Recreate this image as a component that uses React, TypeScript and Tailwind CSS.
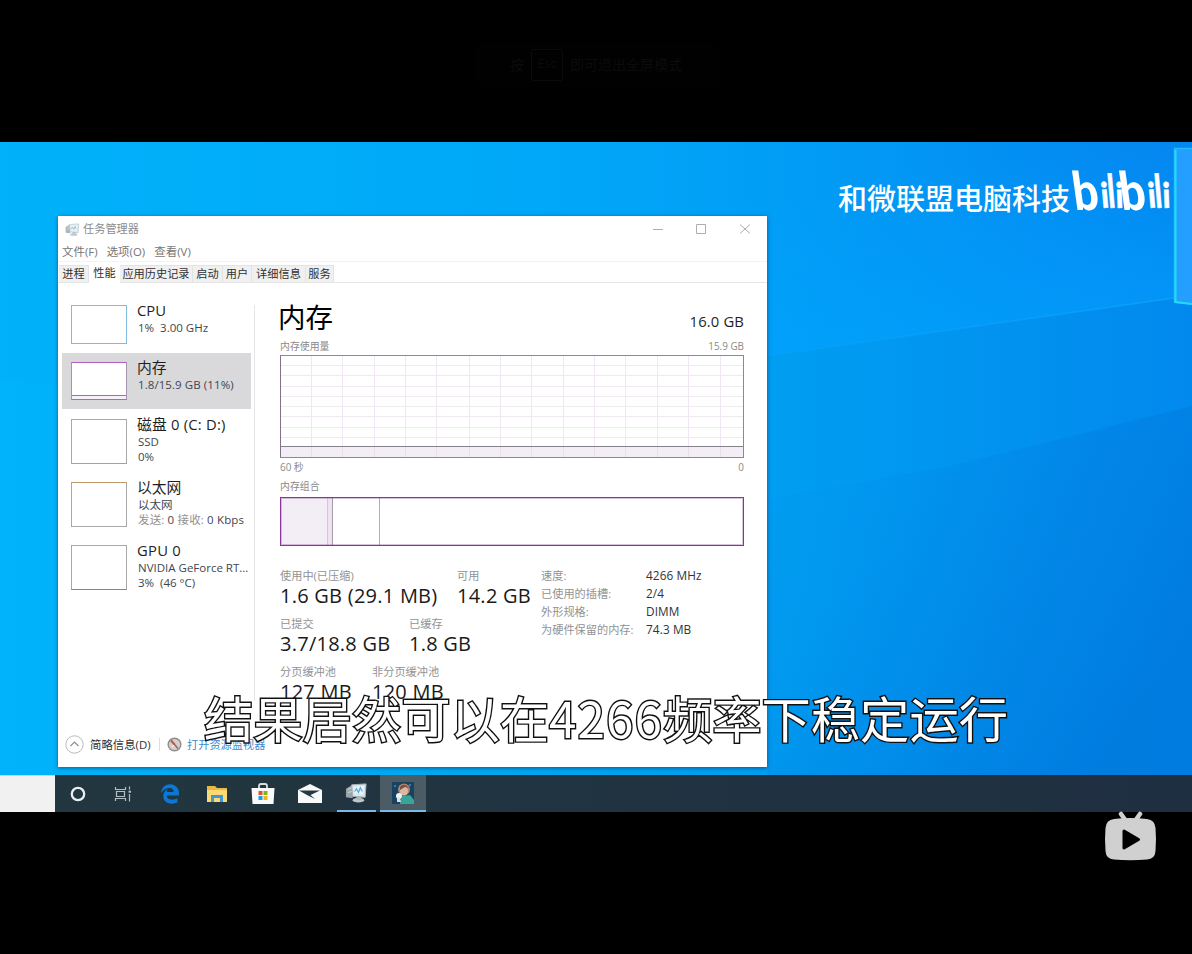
import { FaEdgeLegacy } from 'react-icons/fa'

const tabs = [
  { name: '进程', width: 'w-[30px]' },
  { name: '性能', width: 'w-[31px]', active: true },
  { name: '应用历史记录', width: 'w-[73px]' },
  { name: '启动', width: 'w-[30px]' },
  { name: '用户', width: 'w-[29px]' },
  { name: '详细信息', width: 'w-[54px]' },
  { name: '服务', width: 'w-[28px]' },
]

const gridX = [31, 62, 94, 125, 156, 189, 220, 251, 283, 314, 345, 377, 408, 440]
const gridY = [10, 20, 31, 41, 51, 61, 72, 82]

const specs = [
  { label: '速度:', value: '4266 MHz' },
  { label: '已使用的插槽:', value: '2/4' },
  { label: '外形规格:', value: 'DIMM' },
  { label: '为硬件保留的内存:', value: '74.3 MB' },
]

function Wallpaper() {
  return (
    <svg className="absolute inset-0" width="1192" height="634" viewBox="0 0 1192 634">
      <defs>
        <linearGradient id="base" x1="0" y1="0" x2="1" y2="0">
          <stop offset="0" stopColor="#00b3fb" />
          <stop offset="0.4" stopColor="#00a9f2" />
          <stop offset="0.65" stopColor="#009ef2" />
          <stop offset="1" stopColor="#0289ed" />
        </linearGradient>
        <linearGradient id="sky" x1="0" y1="0" x2="1" y2="0">
          <stop offset="0" stopColor="#00b2f9" />
          <stop offset="0.5" stopColor="#01a6f8" />
          <stop offset="0.75" stopColor="#0297f4" />
          <stop offset="1" stopColor="#0484f0" />
        </linearGradient>
        <linearGradient id="skyFade" x1="0" y1="0" x2="0.4" y2="1">
          <stop offset="0.3" stopColor="#00a4ff" stopOpacity="0" />
          <stop offset="0.9" stopColor="#00a4ff" stopOpacity="0.5" />
        </linearGradient>
        <linearGradient id="beam" x1="0" y1="0" x2="1" y2="0.6">
          <stop offset="0" stopColor="#0080e0" stopOpacity="0" />
          <stop offset="0.35" stopColor="#007fe0" stopOpacity="0.15" />
          <stop offset="1" stopColor="#0077db" stopOpacity="0.75" />
        </linearGradient>
        <linearGradient id="ray" x1="0" y1="0" x2="1" y2="0">
          <stop offset="0" stopColor="#13aeff" stopOpacity="0.1" />
          <stop offset="1" stopColor="#13aeff" stopOpacity="0.5" />
        </linearGradient>
      </defs>
      <rect width="1192" height="634" fill="url(#base)" />
      <path d="M0 0H1192V155L1174 156L767 214L500 240H0Z" fill="url(#sky)" />
      <path d="M500 0H1192V155L1174 156L767 214L500 240Z" fill="url(#skyFade)" />
      <path d="M767 357L950 324L1192 264V634H767Z" fill="url(#beam)" />
      <path d="M767 214L1174 156" stroke="url(#ray)" strokeWidth="1.500" />
      <path d="M1175 7H1192V162L1175 160Z" fill="#249eff" />
      <path d="M1192 6.500H1174.500V160L1192 162" fill="none" stroke="#21bcff" strokeWidth="1.500" />
      <path d="M1175.500 8V160L1192 162" fill="none" stroke="#20dcfa" strokeWidth="2" />
    </svg>
  )
}

function MonitorIcon({ size }: { size: number }) {
  return (
    <svg width={size} height={size} viewBox="0 0 24 24">
      <path d="M1 8L8 4V18L1 17Z" fill="#98a4aa" />
      <path d="M3 9L7 7M3 12L7 11" stroke="#d4dbde" />
      <path d="M7 4L22 3L21 17L8 16Z" fill="#dce4e8" stroke="#a9b3b9" />
      <path d="M9 6L20 5L19 14L10 13.500Z" fill="#e6f4fb" />
      <path d="M10 11L12 8L14 12L16 7L18 11" fill="none" stroke="#55a9cf" strokeWidth="1.200" />
      <ellipse cx="14" cy="20" rx="6" ry="2.500" fill="#c1c7ca" />
      <path d="M12 16H17V20H12Z" fill="#aeb6ba" />
    </svg>
  )
}

function TitleBar() {
  return (
    <div className="flex h-[26px] items-center pl-[7px] text-[11.2px] text-[#8c8c8c]">
      <div className="opacity-80">
        <MonitorIcon size={15} />
      </div>
      <span className="ml-[3px]">任务管理器</span>
      <svg className="ml-auto mr-4" width="98" height="12" viewBox="0 0 98 12" fill="none" stroke="#aeaeae">
        <path d="M0 6.500H10" />
        <path d="M43.500 1.500H52.500V10.500H43.500Z" />
        <path d="M87 1.500L97 10.500M97 1.500L87 10.500" />
      </svg>
    </div>
  )
}

function Sidebar() {
  return (
    <div className="flex h-[396px] w-[197px] flex-col border-r border-[#e5e5e5] pl-1 text-[11.5px] leading-[15px] text-[#3d4650]">
      <div className="flex h-[48px] w-[189px] pl-[9px]">
        <div className="h-[39px] w-[56px] border border-[#7ebbdc]" />
        <div className="ml-[10px] -mt-[4px]">
          <div className="pb-px text-[14.8px] leading-[18px] text-[#1f1f1f]">CPU</div>
          <div className="pl-px whitespace-pre">1%  3.00 GHz</div>
        </div>
      </div>
      <div className="flex h-[56px] w-[189px] bg-[#d9d8da] pl-[9px] pt-[9px]">
        <div className="flex h-[38px] w-[56px] flex-col justify-end border-x border-b border-t border-x-[#a794af] border-b-[#8d7f95] border-t-[#b35cc2] bg-white">
          <div className="h-[4px] border-t border-[#b85fc6] bg-[#f7eff9]" />
        </div>
        <div className="ml-[10px] -mt-[4px]">
          <div className="pb-px text-[14.8px] leading-[18px] text-[#1f1f1f]">内存</div>
          <div className="pl-px tracking-[0.08px] whitespace-nowrap">1.8/15.9 GB (11%)</div>
        </div>
      </div>
      <div className="flex h-[63px] w-[189px] pl-[9px] pt-[10px]">
        <div className="h-[45px] w-[56px] border-x border-t border-b border-x-[#a8a8a8] border-t-[#a8a8a8] border-b-[#82c24a]" />
        <div className="ml-[10px] -mt-[4px]">
          <div className="pb-px text-[14.8px] leading-[18px] tracking-[0.2px] text-[#1f1f1f]">磁盘 0 (C: D:)</div>
          <div className="pl-px">SSD</div>
          <div className="pl-px">0%</div>
        </div>
      </div>
      <div className="flex h-[63px] w-[189px] pl-[9px] pt-[10px]">
        <div className="h-[45px] w-[56px] border-x border-t border-b border-x-[#a8a8a8] border-b-[#a8a8a8] border-t-[#c19868]" />
        <div className="ml-[10px] -mt-[4px]">
          <div className="pb-px text-[14.8px] leading-[18px] text-[#1f1f1f]">以太网</div>
          <div className="pl-px">以太网</div>
          <div className="pl-px tracking-[0.15px] whitespace-nowrap">
            <span className="text-[#929292]">发送:</span> 0 <span className="text-[#929292]">接收:</span> 0 Kbps
          </div>
        </div>
      </div>
      <div className="flex h-[63px] w-[189px] pl-[9px] pt-[10px]">
        <div className="h-[45px] w-[56px] border-x border-t border-b border-x-[#a8a8a8] border-t-[#a8a8a8] border-b-[#479bb9]" />
        <div className="ml-[10px] -mt-[4px]">
          <div className="pb-px text-[14.8px] leading-[18px] tracking-[0.25px] text-[#1f1f1f]">GPU 0</div>
          <div className="pl-px whitespace-nowrap">NVIDIA GeForce RT...</div>
          <div className="pl-px whitespace-pre">3%  (46 °C)</div>
        </div>
      </div>
    </div>
  )
}

function UsageChart() {
  return (
    <svg className="block" width="464" height="104" viewBox="0 0 464 104" shapeRendering="crispEdges">
      {gridX.map((x) => (
        <path key={x} d={`M${x + 0.5} 1V103`} stroke="#f1e6f3" />
      ))}
      {gridY.map((y) => (
        <path key={y} d={`M1 ${y + 0.5}H463`} stroke="#f0e9f1" />
      ))}
      <rect x="1" y="92" width="462" height="11" fill="#f3eef5" />
      {gridX.map((x) => (
        <path key={x} d={`M${x + 0.5} 92V103`} stroke="#e8dfea" />
      ))}
      <path d="M0 91.500H463" stroke="#85808a" />
      <rect x="0.500" y="0.500" width="463" height="102" fill="none" stroke="#b969c4" />
      <path d="M0.500 1V102" stroke="#83718a" />
    </svg>
  )
}

function Composition() {
  return (
    <div className="flex h-[49px] w-[464px] border border-[#8c349b] outline outline-[#8c349b]/30 outline-offset-[-2px]">
      <div className="w-[46px] bg-[#f3eef5]" />
      <div className="w-[6px] border-x border-r-[#a79bab] border-l-[#dcc1e2] bg-[#efe3f2]" />
      <div className="w-[47px] border-r border-[#b0aeb1]" />
    </div>
  )
}

function Stat({ label, value, className }: { label: string; value: string; className: string }) {
  return (
    <div className={className}>
      <div className="text-[11.2px] leading-[17px] whitespace-nowrap text-[#929292]">{label}</div>
      <div className="text-[20px] leading-[24px] tracking-[0.25px] whitespace-nowrap text-[#1a1a1a]">{value}</div>
    </div>
  )
}

function MemoryPanel() {
  return (
    <div className="ml-[25px] w-[464px]">
      <div className="flex h-[36px] items-end justify-between">
        <div className="-ml-[2px] text-[27.5px] leading-[36px] text-black">内存</div>
        <div className="text-[14.8px] leading-[29px] tracking-[0.15px] text-[#1f1f1f]">16.0 GB</div>
      </div>
      <div className="flex h-[19px] items-center justify-between pt-[2px] text-[9.9px] text-[#8a8a8a]">
        <span>内存使用量</span>
        <span>15.9 GB</span>
      </div>
      <UsageChart />
      <div className="flex h-[17px] items-center justify-between text-[9.9px] text-[#8a8a8a]">
        <span>60 秒</span>
        <span>0</span>
      </div>
      <div className="h-[21px] text-[9.9px] leading-[21px] text-[#8a8a8a]">内存组合</div>
      <Composition />
      <div className="mt-[21px] flex">
        <div className="flex w-[261px] flex-col gap-[7px]">
          <div className="flex">
            <Stat className="w-[177px]" label="使用中(已压缩)" value="1.6 GB (29.1 MB)" />
            <Stat className="w-[84px]" label="可用" value="14.2 GB" />
          </div>
          <div className="flex">
            <Stat className="w-[129px]" label="已提交" value="3.7/18.8 GB" />
            <Stat className="w-[90px]" label="已缓存" value="1.8 GB" />
          </div>
          <div className="flex">
            <Stat className="w-[92px]" label="分页缓冲池" value="127 MB" />
            <Stat className="w-[92px]" label="非分页缓冲池" value="120 MB" />
          </div>
        </div>
        <div className="text-[11.2px]">
          {specs.map((spec) => (
            <div key={spec.label} className="flex h-[18px] items-center whitespace-nowrap">
              <span className="w-[105px] text-[#929292]">{spec.label}</span>
              <span className="text-[11.8px] tracking-[0.1px] text-[#333]">{spec.value}</span>
            </div>
          ))}
        </div>
      </div>
    </div>
  )
}

function TaskManager() {
  return (
    <div className="absolute left-[58px] top-[74px] flex h-[551px] w-[709px] flex-col bg-white shadow-[0_1px_4px_rgba(0,40,80,0.6)]">
      <TitleBar />
      <div className="flex h-[20px] items-center gap-[9px] border-b border-[#f3f3f3] pl-1 text-[11.4px] tracking-[0.05px] text-[#757575]">
        <span>文件(F)</span>
        <span>选项(O)</span>
        <span>查看(V)</span>
      </div>
      <div className="flex h-[21px] items-end border-b border-[#e5e5e5] pl-px text-[11.2px] text-[#303030]">
        {tabs.map((tab) => (
          <div
            key={tab.name}
            className={`flex items-center justify-center whitespace-nowrap ${tab.width} ${
              tab.active ? '-mb-px h-[20px] bg-white' : 'h-[17px] border-r border-t border-[#e3e3e3] bg-[#f1f0f1] pt-px'
            }`}
          >
            {tab.name}
          </div>
        ))}
      </div>
      <div className="flex pt-[22px]">
        <Sidebar />
        <div className="-mt-[5px]">
          <MemoryPanel />
        </div>
      </div>
      <div className="mt-auto mb-[13px] flex h-[20px] items-center pl-[7px] text-[11.2px]">
        <svg width="19" height="19" viewBox="0 0 19 19" fill="none">
          <circle cx="9.500" cy="9.500" r="8.700" stroke="#b9b9b9" />
          <path d="M5.500 11L9.500 7L13.500 11" stroke="#8f8f8f" strokeWidth="1.200" />
        </svg>
        <span className="ml-[6px] w-[70px] border-r border-[#ddd] pt-px text-[11.4px] leading-[12px] whitespace-nowrap text-[#303030]">简略信息(D)</span>
        <svg className="ml-[7px]" width="15" height="15" viewBox="0 0 15 15">
          <circle cx="7.500" cy="7.500" r="7" fill="#8c8c8c" />
          <circle cx="7.500" cy="7.500" r="5.600" fill="#d8cfcb" />
          <path d="M4 3.500L8 8" stroke="#bd5846" strokeWidth="2" />
          <path d="M8 8L11 11.500" stroke="#8b6a66" strokeWidth="1.500" />
          <path d="M5 10L7 8" stroke="#ffffff" />
        </svg>
        <span className="ml-[5px] pt-[2px] text-[#3d8bcc]">打开资源监视器</span>
      </div>
    </div>
  )
}

// one "bili" half of the wordmark
function Bili({ x }: { x: number }) {
  return (
    <g transform={`translate(${x} 0)`}>
      <text transform="translate(-2 44) skewX(8) scale(0.85 1)" fontSize="53">b</text>
      <text transform="translate(25 42) rotate(-5) scale(0.85 1)" fontSize="35" stroke="white" strokeWidth="0.6">i</text>
      <text transform="translate(32 42) rotate(-5) scale(0.6 1)" fontSize="46" stroke="white" strokeWidth="0.8">l</text>
      <text transform="translate(39 42) rotate(-2) scale(0.85 1)" fontSize="35" stroke="white" strokeWidth="0.6">i</text>
    </g>
  )
}

function Watermark() {
  return (
    <div className="absolute left-[838px] top-[24px] flex items-start text-white">
      <span className="text-[29px] leading-[65px] font-medium whitespace-nowrap">和微联盟电脑科技</span>
      <svg className="ml-[6px] overflow-visible" width="98" height="64" viewBox="0 0 98 64" fill="white" fontFamily="Lato, sans-serif" fontWeight="900">
        <Bili x={1} />
        <Bili x={48} />
      </svg>
    </div>
  )
}

function Taskbar() {
  return (
    <div className="flex h-[37px] bg-linear-to-r from-[#22373f] to-[#1f2f42]">
      <div className="w-[55px] border-t border-[#c8d4d8] bg-[#f1f1f1]" />
      <div className="flex w-[45px] items-center justify-center">
        <svg width="16" height="16" viewBox="0 0 16 16">
          <circle cx="8" cy="8" r="6.200" fill="none" stroke="#e9eef0" strokeWidth="2.300" />
        </svg>
      </div>
      <div className="flex w-[46px] items-center justify-center">
        <svg width="18" height="18" viewBox="0 0 18 18" fill="none" stroke="#b4bfc4" strokeWidth="1.200">
          <path d="M1.500 2V4.500H11.500V2M1.500 16V13.500H11.500V16M2.500 6.500H10.500V11.500H2.500Z" />
          <path d="M15.500 1.500V4.500M15.500 9V16.500" />
          <path d="M14.500 6.700H17" strokeWidth="2" />
        </svg>
      </div>
      <div className="flex w-[48px] items-center justify-center">
        <FaEdgeLegacy className="text-[20px] text-[#0c78d6]" />
      </div>
      <div className="flex w-[46px] items-center justify-center">
        <svg width="22" height="18" viewBox="0 0 22 18">
          <path d="M1 1H9L11 3H21V17H1Z" fill="#e8b944" />
          <path d="M1 5H21V17H1Z" fill="#fcd975" />
          <path d="M5 17V10H17V17H14V13H8V17Z" fill="#4497c8" />
        </svg>
      </div>
      <div className="flex w-[46px] items-center justify-center">
        <svg width="24" height="24" viewBox="0 0 24 24">
          <path d="M8 7V4Q8 2 10 2H14Q16 2 16 4V7" fill="none" stroke="#d7dfe2" strokeWidth="1.800" />
          <path d="M0.500 6H23.500L22.500 22H1.500Z" fill="#fafafa" />
          <path d="M7.500 9H11.500V13H7.500Z" fill="#e35228" />
          <path d="M12.500 9H16.500V13H12.500Z" fill="#80b51c" />
          <path d="M7.500 14H11.500V18H7.500Z" fill="#169fe4" />
          <path d="M12.500 14H16.500V18H12.500Z" fill="#f5b416" />
        </svg>
      </div>
      <div className="flex w-[47px] items-center justify-center">
        <svg width="24" height="20" viewBox="0 0 24 20">
          <path d="M0 6L12 0L24 6V19H0Z" fill="#f7f9fa" />
          <path d="M1 6.500H22L12.500 11L17 15L9 11Z" fill="#263943" />
        </svg>
      </div>
      <div className="mx-[4px] flex w-[39px] items-center justify-center border-b-2 border-[#79b9e8]">
        <MonitorIcon size={23} />
      </div>
      <div className="flex w-[46px] items-center justify-center border-b-2 border-[#79b9e8] bg-[#4c5c64]">
        <svg width="22" height="22" viewBox="0 0 22 22">
          <rect width="22" height="22" rx="1" fill="#174262" />
          <path d="M8 21L10 14L18 13L22 18V22H8Z" fill="#38a49a" />
          <circle cx="12" cy="7.500" r="6" fill="#b4836c" />
          <ellipse cx="12" cy="9" rx="4" ry="4.500" fill="#dcb8a4" />
          <path d="M8 5Q12 0 17 6L13 5L8 8Z" fill="#765149" />
          <circle cx="7" cy="14" r="3" fill="#eff3f1" />
          <path d="M5 16L8 15L9 20H5Z" fill="#d8e2e3" />
          <circle cx="3" cy="4" r="0.800" fill="#83bee0" />
          <circle cx="18" cy="3" r="0.800" fill="#83bee0" />
        </svg>
      </div>
    </div>
  )
}

export default function App() {
  return (
    <div className="relative flex h-[954px] w-[1192px] flex-col overflow-hidden bg-black font-['Open_Sans','Noto_Sans_CJK_SC',sans-serif]">
      {/* Fullscreen hint, almost faded out */}
      <div className="flex h-[141px] items-start justify-center pt-[42px]">
        <div className="flex h-[45px] w-[245px] items-center justify-center bg-[#010101] text-[14px] text-[#0b0b0b]">
          <span>按</span>
          <span className="mx-[7px] flex h-8 w-8 items-center justify-center rounded-[2px] border border-[#0b0b0b] text-[12.5px]">Esc</span>
          <span>即可退出全屏模式</span>
        </div>
      </div>

      {/* Video frame */}
      <div className="relative mt-px h-[633px] overflow-hidden">
        <Wallpaper />
        <Watermark />
        <TaskManager />
      </div>
      <Taskbar />

      {/* Subtitle */}
      <div className="absolute left-[204px] top-[682px] text-[49.3px] leading-[70px] whitespace-nowrap text-white [-webkit-text-stroke:2.8px_#111] [paint-order:stroke_fill] font-['Noto_Sans_CJK_SC',sans-serif]">
        结果居然可以在<span className="tracking-[1.1px]">4266</span>频率下稳定运行
      </div>

      {/* Player play button */}
      <svg className="absolute left-[1104px] top-[811px]" width="53" height="50" viewBox="0 0 53 50">
        <path d="M17 3L22 10M36 3L31 10" stroke="#d0d0d0" strokeWidth="4.500" strokeLinecap="round" />
        <path d="M10 8Q26 6 43 8Q51 9 51.500 17Q52.500 28 51.500 40Q51 48 43 48.500Q26 50 10 48.500Q2 48 1.500 40Q0.500 28 1.500 17Q2 9 10 8Z" fill="#d0d0d0" />
        <path d="M20 20L34.500 28.500L20 37Z" fill="#000" stroke="#000" strokeWidth="3" strokeLinejoin="round" />
      </svg>
    </div>
  )
}
